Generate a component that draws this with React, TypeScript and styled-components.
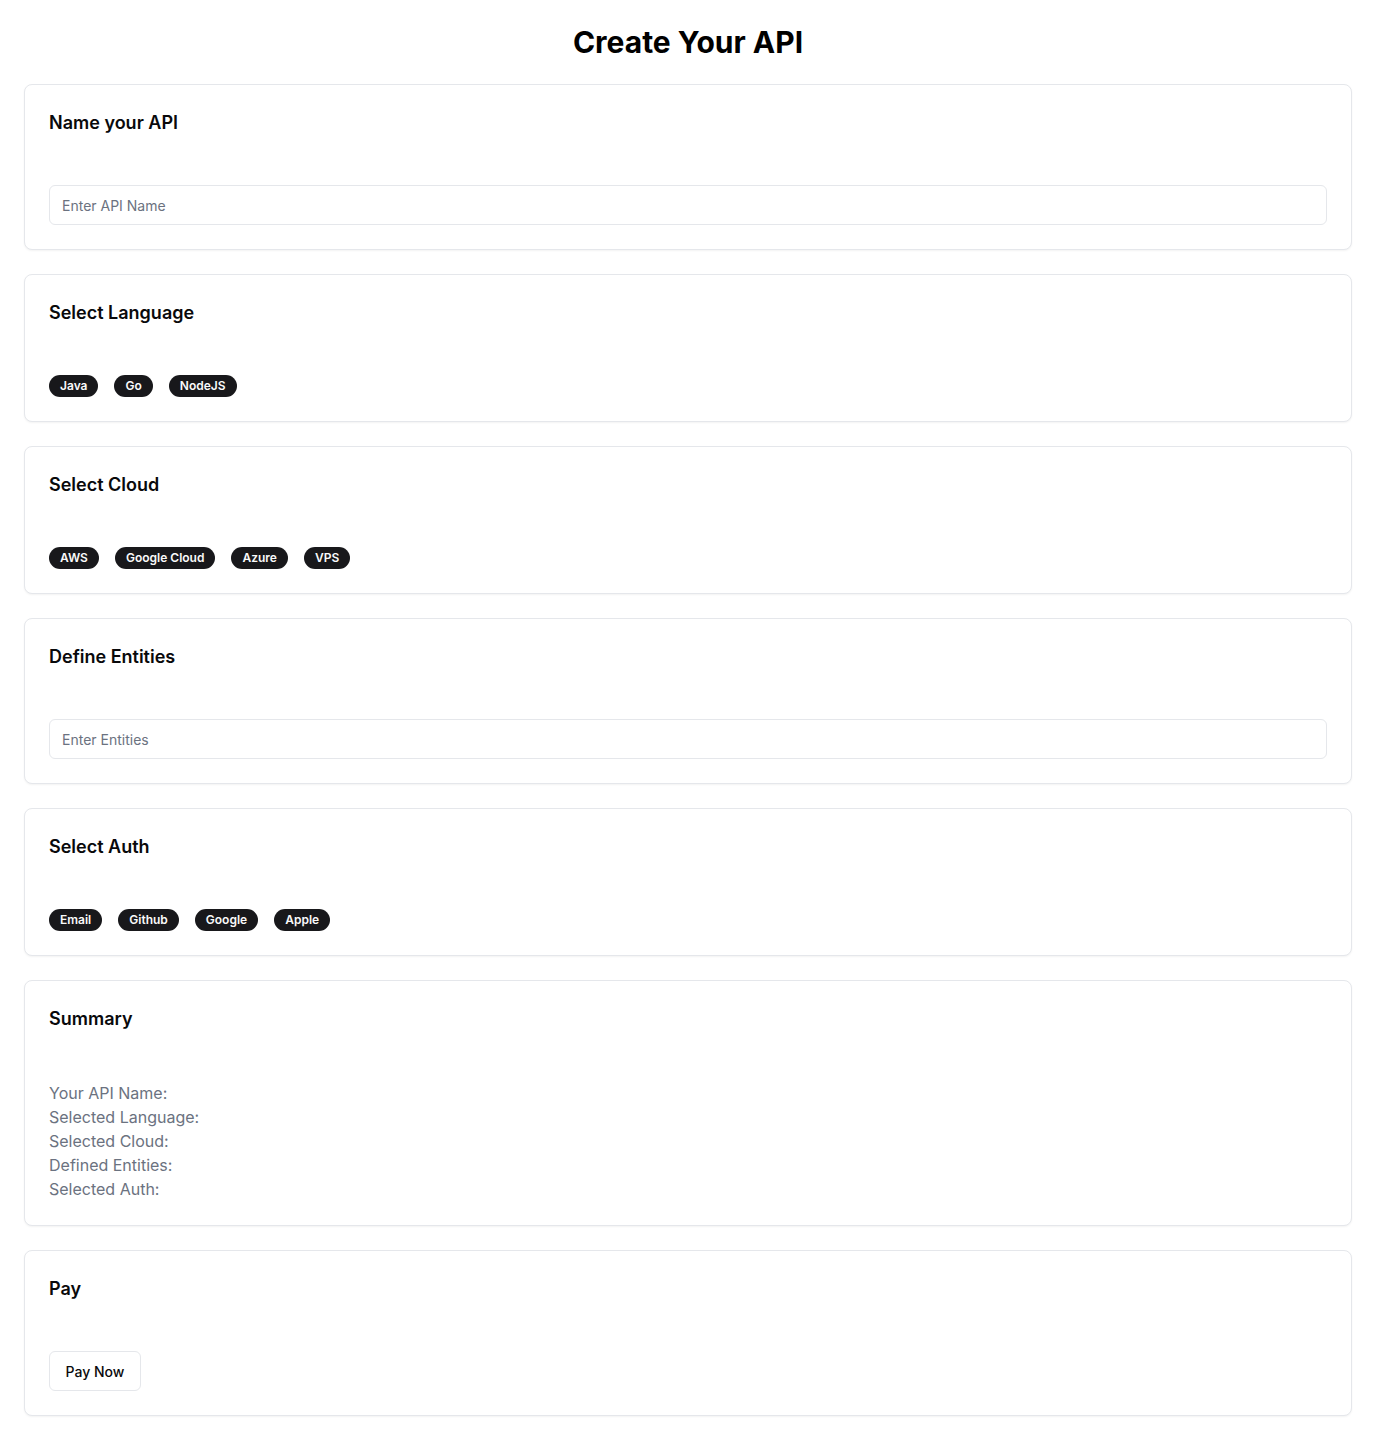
import React from "react";
import styled, { createGlobalStyle } from "styled-components";

const Global = createGlobalStyle`
  * { box-sizing: border-box; }
  html, body { margin: 0; padding: 0; background: #ffffff; }
  body {
    font-family: Inter, "Noto Sans", "Liberation Sans", sans-serif;
    color: #09090b;
    -webkit-font-smoothing: antialiased;
  }
`;

const Page = styled.main`
  padding: 24px 24px 24px;
  display: flex;
  flex-direction: column;
  gap: 24px;
`;

const Heading = styled.h1`
  margin: 0;
  text-align: center;
  font-size: 30px;
  line-height: 36px;
  font-weight: 700;
  color: #000;
`;

const Card = styled.section`
  border: 1px solid #e5e7eb;
  border-radius: 8px;
  background: #fff;
  box-shadow: 0 1px 2px rgba(0, 0, 0, 0.05);
  padding: 24px;
  display: flex;
  flex-direction: column;
  gap: 48px;
`;

const CardTitle = styled.h2`
  margin: 0;
  font-size: 18px;
  line-height: 28px;
  font-weight: 600;
  color: #09090b;
`;

const Input = styled.input`
  width: 100%;
  height: 40px;
  border: 1px solid #e5e7eb;
  border-radius: 6px;
  padding: 0 12px;
  font-family: inherit;
  font-size: 14px;
  color: #09090b;
  background: #fff;
  outline: none;
  &::placeholder { color: #6b7280; }
`;

const BadgeRow = styled.div`
  display: flex;
  gap: 16px;
`;

const Badge = styled.button`
  display: inline-flex;
  align-items: center;
  height: 22px;
  padding: 0 10px;
  border-radius: 9999px;
  border: 1px solid transparent;
  background: #18181b;
  color: #fafafa;
  font-family: inherit;
  font-size: 12px;
  font-weight: 600;
  line-height: 16px;
  cursor: pointer;
`;

const SummaryList = styled.div`
  display: flex;
  flex-direction: column;
`;

const SummaryLine = styled.p`
  margin: 0;
  font-size: 16px;
  line-height: 24px;
  color: #6b7280;
`;

const PayButton = styled.button`
  align-self: flex-start;
  height: 40px;
  padding: 0 15.5px;
  border: 1px solid #e5e7eb;
  border-radius: 6px;
  background: #fff;
  color: #09090b;
  font-family: inherit;
  font-size: 14px;
  font-weight: 500;
  cursor: pointer;
`;

const BadgeCard = ({ title, items }: { title: string; items: string[] }) => (
  <Card>
    <CardTitle>{title}</CardTitle>
    <BadgeRow>
      {items.map((i) => (
        <Badge key={i}>{i}</Badge>
      ))}
    </BadgeRow>
  </Card>
);

const InputCard = ({ title, placeholder }: { title: string; placeholder: string }) => (
  <Card>
    <CardTitle>{title}</CardTitle>
    <Input placeholder={placeholder} />
  </Card>
);

export default function App() {
  return (
    <>
      <Global />
      <Page>
        <Heading>Create Your API</Heading>
        <InputCard title="Name your API" placeholder="Enter API Name" />
        <BadgeCard title="Select Language" items={["Java", "Go", "NodeJS"]} />
        <BadgeCard title="Select Cloud" items={["AWS", "Google Cloud", "Azure", "VPS"]} />
        <InputCard title="Define Entities" placeholder="Enter Entities" />
        <BadgeCard title="Select Auth" items={["Email", "Github", "Google", "Apple"]} />
        <Card>
          <CardTitle>Summary</CardTitle>
          <SummaryList>
            <SummaryLine>Your API Name: </SummaryLine>
            <SummaryLine>Selected Language: </SummaryLine>
            <SummaryLine>Selected Cloud: </SummaryLine>
            <SummaryLine>Defined Entities: </SummaryLine>
            <SummaryLine>Selected Auth: </SummaryLine>
          </SummaryList>
        </Card>
        <Card>
          <CardTitle>Pay</CardTitle>
          <PayButton>Pay Now</PayButton>
        </Card>
      </Page>
    </>
  );
}
